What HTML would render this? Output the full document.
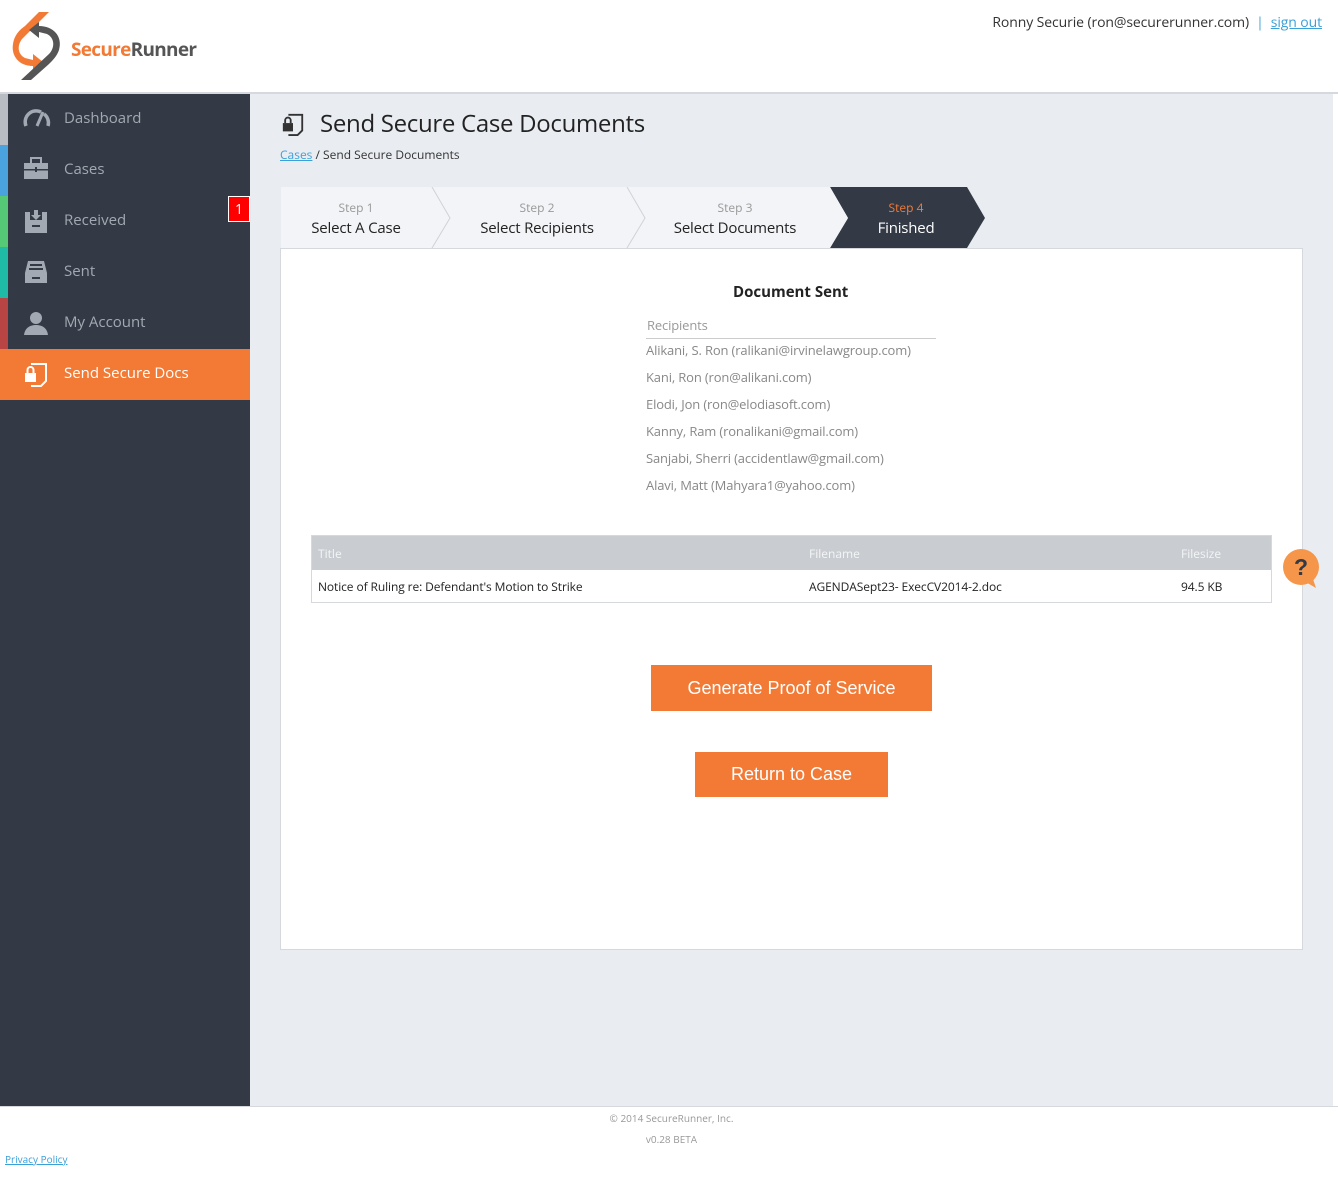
<!DOCTYPE html>
<html><head><meta charset="utf-8">
<style>
*{box-sizing:border-box;margin:0;padding:0}
body{width:1338px;height:1179px;background:#fff;font-family:"Open Sans","Liberation Sans",sans-serif;position:relative;overflow:hidden;color:#333}
.abs{position:absolute}
#header{left:0;top:0;width:1338px;height:94px;background:#fff;border-bottom:2px solid #d5d8dc}
#side{left:0;top:94px;width:250px;height:1012px;background:#333a45}
#main{left:250px;top:94px;width:1083px;height:1012px;background:#e9ecf1}
.nav{position:absolute;left:0;width:250px;height:51px;color:#a3a9b2;font-size:15px}
.nav .strip{position:absolute;left:0;top:0;width:8px;height:51px}
.nav span.t{position:absolute;left:64px;top:14px}
.nav svg{position:absolute;left:23px;top:12px}
.step{position:absolute;top:0;text-align:center}
.step .s{font-size:12px;color:#999;margin-top:12px}
.step .n{font-size:15px;color:#222;margin-top:2px;letter-spacing:-0.2px}
.rec{position:absolute;left:646px;font-size:13px;color:#888;letter-spacing:-0.15px}
.btn{position:absolute;background:#f27a35;color:#fff;font-size:18px;text-align:center;font-family:"Liberation Sans",sans-serif}
</style></head><body>
<div id="header" class="abs">
  <svg class="abs" style="left:9px;top:10px" width="56" height="72" viewBox="0 0 56 72">
    <path d="M30 2 L40 2 L14 28 C8 34 8 44 16 48 L24 50 L24 44 L34 52 L24 60 L24 56 C10 56 2 46 4 34 C5 26 10 20 16 16 Z" fill="#f27a35"/>
    <path d="M22 70 L12 70 L40 44 C46 38 46 28 38 24 L30 22 L30 28 L20 20 L30 12 L30 16 C44 16 54 26 50 40 C48 46 44 50 40 54 Z" fill="#555"/>
  </svg>
  <div class="abs" style="left:71px;top:36px;font-size:19px;font-weight:bold;letter-spacing:-0.7px"><span style="color:#f27a35">Secure</span><span style="color:#555">Runner</span></div>
  <div class="abs" style="right:16px;top:13px;font-size:14px;color:#333;letter-spacing:-0.1px">Ronny Securie (ron@securerunner.com) &nbsp;<span style="color:#3aa0d8">|</span>&nbsp; <span style="color:#3aa0d8;text-decoration:underline">sign out</span></div>
</div>
<div id="side" class="abs">
  <div class="nav" style="top:0"><div class="strip" style="background:#b8bcc3"></div>
    <svg width="28" height="24" viewBox="0 0 28 24"><path d="M3 20 A11 11 0 0 1 18 6" stroke="#a3a9b2" stroke-width="3.5" fill="none"/><path d="M21 8 A11 11 0 0 1 25 20" stroke="#a3a9b2" stroke-width="3.5" fill="none"/><path d="M14 20 L20 6" stroke="#a3a9b2" stroke-width="3"/></svg>
    <span class="t">Dashboard</span></div>
  <div class="nav" style="top:51px"><div class="strip" style="background:#4aa3df"></div>
    <svg width="26" height="24" viewBox="0 0 26 24"><rect x="1" y="6" width="24" height="16" fill="#a3a9b2"/><rect x="8" y="1" width="10" height="6" fill="none" stroke="#a3a9b2" stroke-width="2"/><rect x="1" y="12" width="24" height="1.5" fill="#333a45"/><rect x="12" y="10" width="2" height="5" fill="#333a45"/></svg>
    <span class="t">Cases</span></div>
  <div class="nav" style="top:102px"><div class="strip" style="background:#55c976"></div>
    <svg width="26" height="26" viewBox="0 0 26 26"><path d="M2 4 L7 4 L7 12 L19 12 L19 4 L24 4 L24 25 L2 25 Z" fill="#a3a9b2"/><path d="M11 2 L15 2 L15 7 L18 7 L13 12 L8 7 L11 7Z" fill="#a3a9b2"/><rect x="9" y="17" width="8" height="2" fill="#333a45"/></svg>
    <span class="t">Received</span>
    <div class="abs" style="left:228px;top:0;width:22px;height:26px;background:#f00;color:#fff;font-size:14px;text-align:center;line-height:26px;border:1px solid #fff">1</div></div>
  <div class="nav" style="top:153px"><div class="strip" style="background:#1fbba6"></div>
    <svg width="26" height="26" viewBox="0 0 26 26"><path d="M5 2 L21 2 L24 14 L24 24 L2 24 L2 14 Z" fill="#a3a9b2"/><rect x="7" y="5" width="12" height="2" fill="#333a45"/><rect x="6" y="9" width="14" height="2" fill="#333a45"/><rect x="9" y="18" width="8" height="2" fill="#333a45"/></svg>
    <span class="t">Sent</span></div>
  <div class="nav" style="top:204px"><div class="strip" style="background:#b94444"></div>
    <svg width="26" height="26" viewBox="0 0 26 26"><circle cx="13" cy="8" r="6" fill="#a3a9b2"/><path d="M1 25 C2 17 8 15 13 15 C18 15 24 17 25 25 Z" fill="#a3a9b2"/></svg>
    <span class="t">My Account</span></div>
  <div class="nav" style="top:255px;background:#f27a35;color:#fff">
    <svg width="26" height="26" viewBox="0 0 26 26"><path d="M8 3 L23 3 L23 20 L18 25 L8 25" fill="none" stroke="#fff" stroke-width="2"/><rect x="2" y="12" width="11" height="9" fill="#fff"/><path d="M4.5 12 V9 A3 3 0 0 1 10.5 9 V12" fill="none" stroke="#fff" stroke-width="2"/></svg>
    <span class="t" style="color:#fff">Send Secure Docs</span></div>
</div>
<div id="main" class="abs">
  <svg class="abs" style="left:31px;top:18px" width="24" height="24" viewBox="0 0 26 26"><path d="M8 3 L23 3 L23 20 L18 25 L8 25" fill="none" stroke="#333" stroke-width="2"/><rect x="2" y="12" width="11" height="9" fill="#333"/><path d="M4.5 12 V9 A3 3 0 0 1 10.5 9 V12" fill="none" stroke="#333" stroke-width="2"/></svg>
  <div class="abs" style="left:70px;top:13px;font-size:24px;color:#222;letter-spacing:-0.3px">Send Secure Case Documents</div>
  <div class="abs" style="left:30px;top:52px;font-size:12px;color:#333"><span style="color:#3aa0d8;text-decoration:underline">Cases</span> / Send Secure Documents</div>
  <div class="abs" style="left:30px;top:154px;width:1023px;height:702px;background:#fff;border:1px solid #d5d8dc"></div>
  <svg class="abs" style="left:31px;top:93px" width="710" height="62" viewBox="0 0 710 62">
    <rect x="0" y="0" width="560" height="61" fill="#f3f4f7"/>
    <polyline points="151,0 169,31 151,61" fill="none" stroke="#cfd2d6"/>
    <polyline points="346,0 364,31 346,61" fill="none" stroke="#cfd2d6"/>
    <polygon points="549,0 686,0 704,31 686,61 549,61 567,31" fill="#333a45"/>
    <polygon points="549,0 567,31 549,61 540,61 540,0" fill="#f3f4f7"/>
  </svg>
  <div class="step" style="left:31px;top:93px;width:150px"><div class="s">Step 1</div><div class="n">Select A Case</div></div>
  <div class="step" style="left:212px;top:93px;width:150px"><div class="s">Step 2</div><div class="n">Select Recipients</div></div>
  <div class="step" style="left:410px;top:93px;width:150px"><div class="s">Step 3</div><div class="n">Select Documents</div></div>
  <div class="step" style="left:581px;top:93px;width:150px"><div class="s" style="color:#f27a35">Step 4</div><div class="n" style="color:#fff">Finished</div></div>
</div>
<div class="abs" style="left:733px;top:282px;font-size:15px;font-weight:bold;color:#222">Document Sent</div>
<div class="rec" style="top:316px;color:#999;width:290px;border-bottom:1px solid #ccc;padding-bottom:4px;padding-left:1px">Recipients</div>
<div class="rec" style="top:341px">Alikani, S. Ron (ralikani@irvinelawgroup.com)</div>
<div class="rec" style="top:368px">Kani, Ron (ron@alikani.com)</div>
<div class="rec" style="top:395px">Elodi, Jon (ron@elodiasoft.com)</div>
<div class="rec" style="top:422px">Kanny, Ram (ronalikani@gmail.com)</div>
<div class="rec" style="top:449px">Sanjabi, Sherri (accidentlaw@gmail.com)</div>
<div class="rec" style="top:476px">Alavi, Matt (Mahyara1@yahoo.com)</div>
<div class="abs" style="left:311px;top:535px;width:961px;height:68px;border:1px solid #d5d8dc;background:#fff">
  <div style="height:34px;background:#c9ccd1;color:#f4f5f6;font-size:12px;position:relative">
    <span class="abs" style="left:6px;top:9px">Title</span><span class="abs" style="left:497px;top:9px">Filename</span><span class="abs" style="left:869px;top:9px">Filesize</span></div>
  <div style="position:relative;font-size:12px;color:#222;letter-spacing:-0.1px">
    <span class="abs" style="left:6px;top:8px">Notice of Ruling re: Defendant's Motion to Strike</span><span class="abs" style="left:497px;top:8px">AGENDASept23- ExecCV2014-2.doc</span><span class="abs" style="left:869px;top:8px">94.5 KB</span></div>
</div>
<svg class="abs" style="left:1282px;top:548px" width="40" height="42" viewBox="0 0 40 42"><circle cx="19" cy="19" r="18" fill="#f5964a"/><path d="M22 33 L34 40 L30 28 Z" fill="#f5964a"/><text x="19" y="27" text-anchor="middle" font-family="Liberation Sans" font-weight="bold" font-size="23" fill="#333a45">?</text></svg>
<div class="btn" style="left:651px;top:665px;width:281px;height:46px;line-height:46px">Generate Proof of Service</div>
<div class="btn" style="left:695px;top:752px;width:193px;height:45px;line-height:45px">Return to Case</div>
<div class="abs" style="left:0;top:1106px;width:1338px;height:1px;background:#d5d8dc"></div>
<div class="abs" style="left:0;top:1111px;width:1343px;text-align:center;font-size:10px;color:#999">© 2014 SecureRunner, Inc.</div>
<div class="abs" style="left:0;top:1132px;width:1343px;text-align:center;font-size:10px;color:#999">v0.28 BETA</div>
<div class="abs" style="left:5px;top:1152px;font-size:10px;color:#3aa0d8;text-decoration:underline">Privacy Policy</div>
</body></html>
